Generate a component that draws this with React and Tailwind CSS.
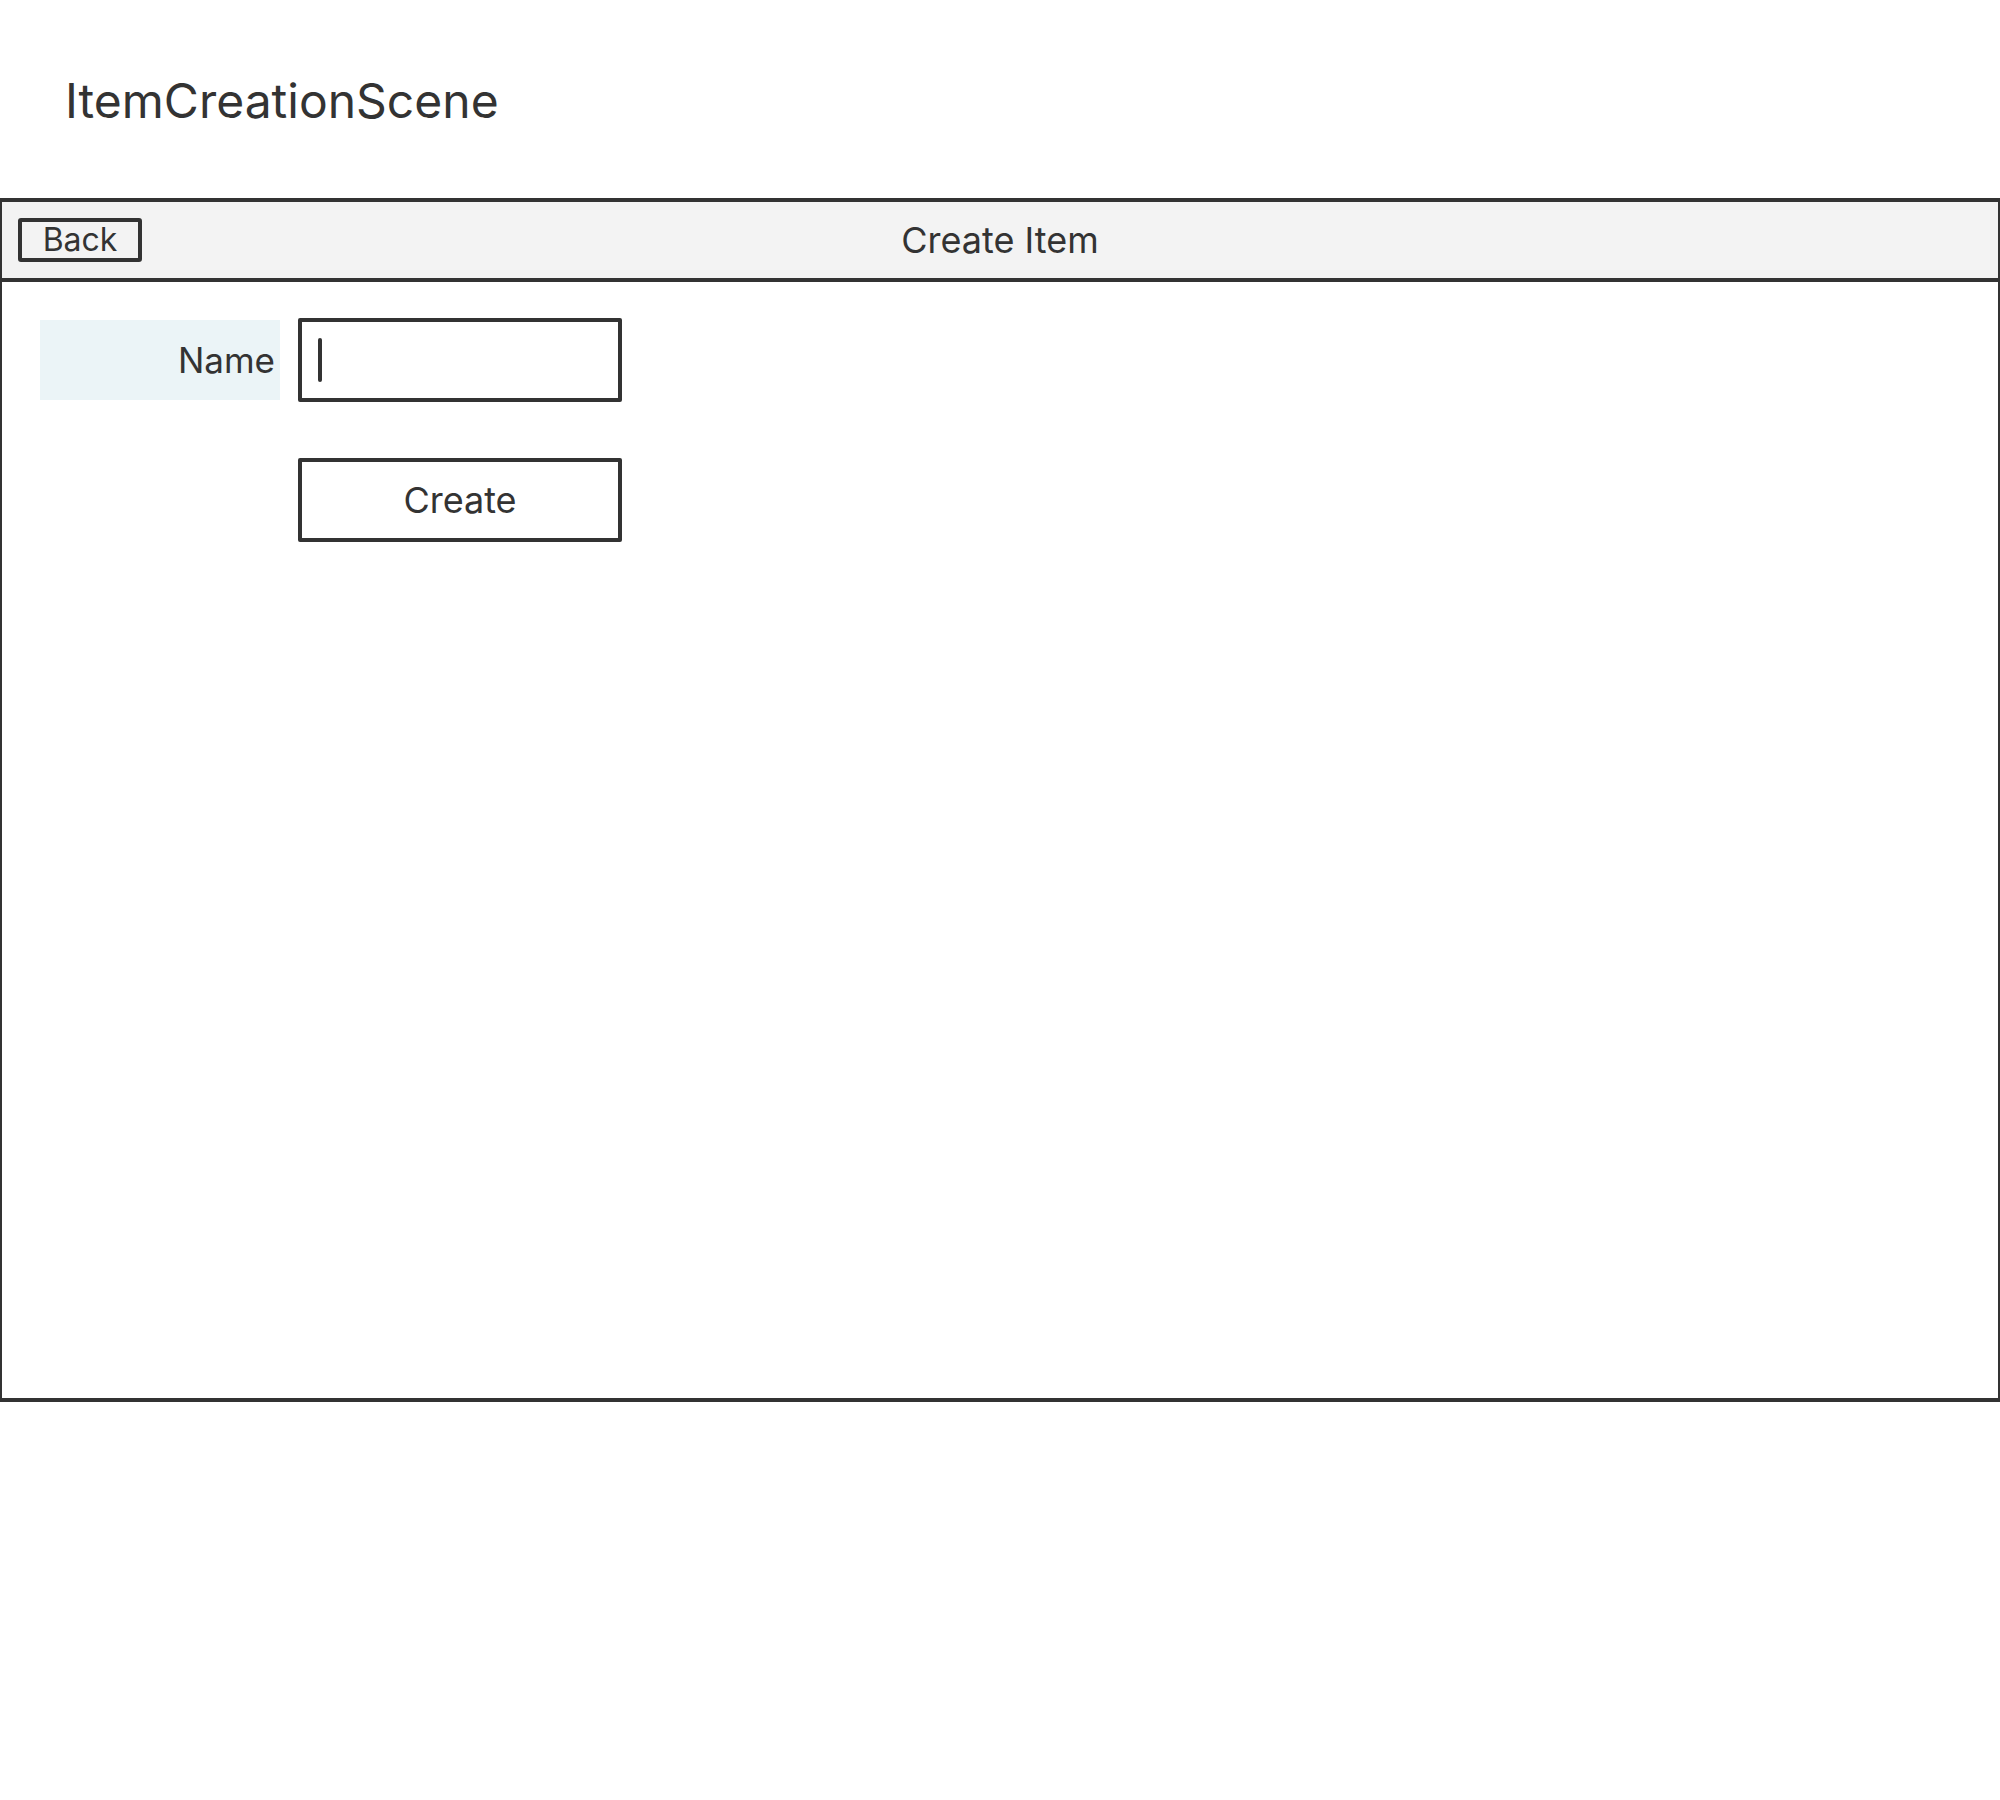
import React from "react";

export default function App() {
  return (
    <div
      className="w-full min-h-[1800px] bg-white overflow-hidden text-[#333333]"
      style={{ fontFamily: "Inter, 'Noto Sans', sans-serif" }}
    >
      <div className="h-[198px] pl-[65px] pt-[77px]">
        <h1 className="text-[48px] leading-none font-normal">ItemCreationScene</h1>
      </div>

      <div className="-mx-[2px] border-4 border-[#333333] h-[1204px] flex flex-col">
        <div className="h-[80px] border-b-4 border-[#333333] bg-[#f3f3f3] grid grid-cols-[1fr_auto_1fr] items-center">
          <div className="pl-[16px] flex items-center">
            <button className="w-[124px] h-[44px] border-4 border-[#333333] rounded-[3px] flex items-center justify-center text-[32px] leading-none text-[#333333]">
              Back
            </button>
          </div>
          <div className="text-[36px] leading-none">Create Item</div>
          <div />
        </div>

        <div className="flex-1 bg-white pl-[38px] pt-[36px] flex flex-col gap-[56px]">
          <div className="flex items-center gap-[18px]">
            <div className="w-[240px] h-[80px] bg-[#ebf4f7] flex items-center justify-end pr-[5px] text-[35px] leading-none">
              Name
            </div>
            <div className="w-[324px] h-[84px] border-4 border-[#333333] rounded-[2px] flex items-center pl-[16px] bg-white">
              <span className="block w-[4px] h-[44px] rounded-full bg-[#333333]" />
            </div>
          </div>
          <div className="flex pl-[258px]">
            <button className="w-[324px] h-[84px] border-4 border-[#333333] rounded-[2px] flex items-center justify-center text-[36px] leading-none text-[#333333] bg-white">
              Create
            </button>
          </div>
        </div>
      </div>
    </div>
  );
}
